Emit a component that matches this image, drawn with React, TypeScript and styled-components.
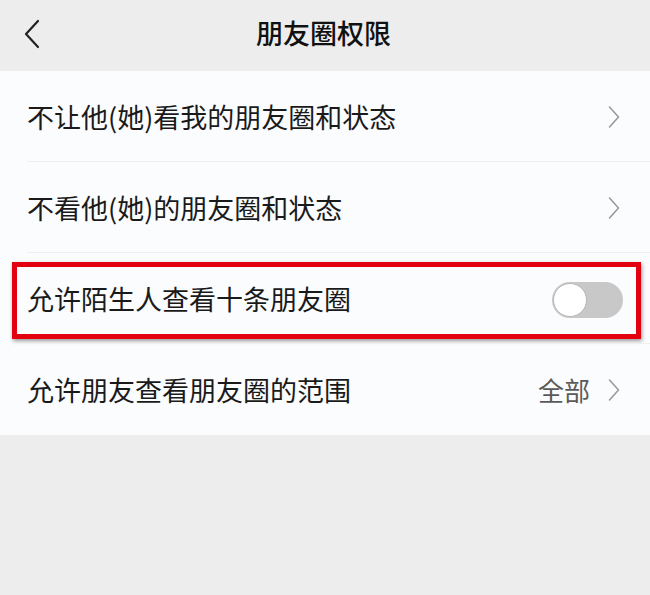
import React from "react";
import styled, { createGlobalStyle } from "styled-components";

const Global = createGlobalStyle`
  html, body { margin: 0; padding: 0; background: #ededed; }
  body { font-family: "Noto Sans CJK SC", "Noto Sans", sans-serif; }
`;

const Page = styled.div`
  width: 650px;
  height: 595px;
  background: #ededed;
  display: flex;
  flex-direction: column;
`;

const Header = styled.header`
  height: 71px;
  display: grid;
  grid-template-columns: 60px 1fr 60px;
  align-items: center;
  background: #ededed;
`;

const BackBtn = styled.div`
  display: flex;
  align-items: center;
  padding-left: 23px;
  height: 100%;
  padding-bottom: 4px;
  box-sizing: border-box;
`;

const Title = styled.h1`
  margin: 0;
  text-align: center;
  font-size: 27px;
  font-weight: 500;
  color: #111;
  padding-bottom: 6px;
  padding-right: 3px;
`;

const List = styled.div`
  background: #fbfcfd;
  display: flex;
  flex-direction: column;
`;

const Row = styled.div<{ $divider?: boolean }>`
  position: relative;
  height: 91px;
  display: flex;
  align-items: center;
  padding: 0 30px 0 27px;
  box-sizing: border-box;
  &::after {
    content: "";
    display: ${(p) => (p.$divider ? "block" : "none")};
    position: absolute;
    left: 27px;
    right: 0;
    bottom: 0;
    height: 1px;
    background: #efefef;
  }
`;

const Label = styled.span`
  flex: 1;
  font-size: 27px;
  color: #1a1a1a;
  line-height: 1;
`;

const Value = styled.span`
  font-size: 26px;
  color: #5a5a5a;
  margin-right: 18px;
  line-height: 1;
`;

const Track = styled.div`
  width: 71px;
  height: 36px;
  border-radius: 18px;
  background: #c8c8c8;
  display: flex;
  align-items: center;
  margin-right: -3px;
  margin-top: 2px;
`;

const Knob = styled.div`
  width: 34px;
  height: 34px;
  border-radius: 50%;
  background: #fff;
  border: 1.5px solid #b8b8b8;
  box-sizing: border-box;
  margin-left: 1px;
`;

const Highlight = styled.div`
  position: absolute;
  left: 12px;
  right: 9px;
  top: 9px;
  bottom: 5px;
  border: 5px solid #e3000f;
  box-shadow: 1px 2px 4px rgba(0, 0, 0, 0.4);
  pointer-events: none;
`;

const Chevron = () => (
  <svg width="12" height="24" viewBox="0 0 12 24" fill="none">
    <path d="M1.5 2 L10.5 12 L1.5 22" stroke="#9a9a9a" strokeWidth="1.6" strokeLinecap="round" strokeLinejoin="round" />
  </svg>
);

const Back = () => (
  <svg width="18" height="30" viewBox="0 0 18 30" fill="none">
    <path d="M15 2 L3 15 L15 28" stroke="#222" strokeWidth="2.2" strokeLinecap="round" strokeLinejoin="round" />
  </svg>
);

export default function App() {
  return (
    <>
      <Global />
      <Page>
        <Header>
          <BackBtn>
            <Back />
          </BackBtn>
          <Title>朋友圈权限</Title>
          <div />
        </Header>
        <List>
          <Row $divider>
            <Label>不让他(她)看我的朋友圈和状态</Label>
            <Chevron />
          </Row>
          <Row $divider>
            <Label>不看他(她)的朋友圈和状态</Label>
            <Chevron />
          </Row>
          <Row $divider>
            <Label>允许陌生人查看十条朋友圈</Label>
            <Track>
              <Knob />
            </Track>
            <Highlight />
          </Row>
          <Row>
            <Label>允许朋友查看朋友圈的范围</Label>
            <Value>全部</Value>
            <Chevron />
          </Row>
        </List>
      </Page>
    </>
  );
}
